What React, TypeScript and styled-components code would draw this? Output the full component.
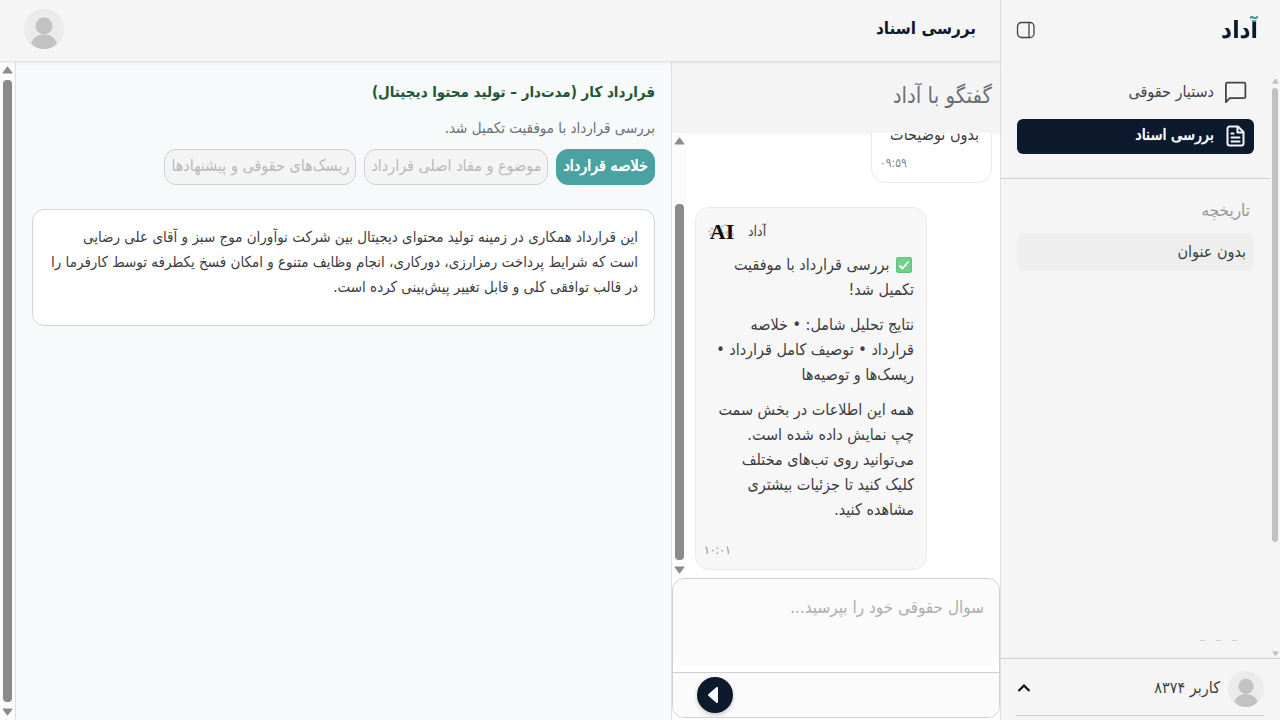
import React from "react";
import styled, { createGlobalStyle, css } from "styled-components";

const GlobalStyle = createGlobalStyle`
  * { box-sizing: border-box; }
  body {
    margin: 0;
    background: #f5f5f5;
    color: #3d3d42;
    font-family: "DejaVu Sans Condensed", "DejaVu Sans", sans-serif;
  }
  button, textarea { font-family: inherit; }
  p, h1, h2 { margin: 0; }
`;

/* Medium weight: the family only has regular and bold. */
const medium = css`
  font-weight: 400;
  text-shadow: 0 0 0 currentColor, 0 0 1px currentColor;
`;

const Shell = styled.div`
  display: flex;
  height: 100vh;
  overflow: hidden;
`;

/* ---------- scroll bars ---------- */

const Track = styled.div<{ $width: number; $bg: string }>`
  flex: none;
  width: ${(p) => p.$width}px;
  display: flex;
  flex-direction: column;
  align-items: center;
  justify-content: space-between;
  gap: 6px;
  padding: 4px 0;
  background: ${(p) => p.$bg};
`;

const NarrowTrack = styled(Track)`
  gap: 4px;
  padding: 2px 0 1px;
`;

const Rail = styled.div<{ $end?: boolean }>`
  flex: 1;
  min-height: 0;
  display: flex;
  flex-direction: column;
  justify-content: ${(p) => (p.$end ? "flex-end" : "flex-start")};
`;

const Thumb = styled.div<{ $width: number; $length: string; $color: string }>`
  width: ${(p) => p.$width}px;
  height: ${(p) => p.$length};
  border-radius: 4px;
  background: ${(p) => p.$color};
`;

type ScrollBarProps = {
  narrow?: boolean;
  length: string;
  end?: boolean;
};

function ScrollBar({ narrow, length, end }: ScrollBarProps) {
  const Bar = narrow ? NarrowTrack : Track;
  const color = narrow ? "#c1c1c1" : "#8b8b8b";
  const thumb = narrow ? 6 : 9;
  const arrow = narrow ? 7 : 11;
  const arrowHeight = narrow ? 6 : 8;
  return (
    <Bar $width={narrow ? 10 : 15} $bg={narrow ? "transparent" : "#fcfcfc"} aria-hidden="true">
      <svg width={arrow} height={arrowHeight} viewBox="0 0 10 8" preserveAspectRatio="none">
        <path d="M5 1 9 7H1Z" fill={color} stroke={color} strokeLinejoin="round" />
      </svg>
      <Rail $end={end}>
        <Thumb $width={thumb} $length={length} $color={color} />
      </Rail>
      <svg width={arrow} height={arrowHeight} viewBox="0 0 10 8" preserveAspectRatio="none">
        <path d="M5 7 9 1H1Z" fill={color} stroke={color} strokeLinejoin="round" />
      </svg>
    </Bar>
  );
}

/* ---------- sidebar ---------- */

const Sidebar = styled.aside`
  flex: none;
  width: 280px;
  display: flex;
  flex-direction: column;
  border-left: 1px solid #e0e1e6;
  background: #f5f5f5;
`;

const SidebarHeader = styled.header`
  height: 76px;
  flex: none;
  display: flex;
  align-items: flex-start;
  justify-content: space-between;
  padding: 16px 22px 0 15px;
`;

const Logo = styled.a`
  font-size: 24px;
  line-height: 28px;
  font-weight: 700;
  text-decoration: none;
  color: transparent;
  background:
    linear-gradient(#4aa3a2, #4aa3a2) right top / 12px 6px no-repeat,
    #0d1a2e;
  background-clip: text;
  -webkit-background-clip: text;
`;

const IconButton = styled.button`
  display: flex;
  align-items: center;
  justify-content: center;
  width: 20px;
  height: 28px;
  padding: 0;
  border: 0;
  background: none;
  color: #444;
  cursor: pointer;
`;

const SidebarBody = styled.div`
  flex: 1;
  min-height: 0;
  display: flex;
`;

const SidebarContent = styled.div`
  flex: 1;
  min-width: 0;
  display: flex;
  flex-direction: column;
`;

const Nav = styled.nav`
  display: flex;
  flex-direction: column;
  gap: 8px;
  padding: 0 16px 24px;
  border-bottom: 1px solid #cfcfd2;
`;

const NavLink = styled.a<{ $active?: boolean }>`
  display: flex;
  align-items: center;
  gap: 9px;
  height: 35px;
  padding: 0 6px 2px;
  border-radius: 6px;
  text-decoration: none;
  font-size: 16px;
  line-height: 24px;
  color: ${(p) => (p.$active ? "#f4f6fa" : "#444448")};
  background: ${(p) => (p.$active ? "#0d1a2e" : "transparent")};
  ${(p) => p.$active && medium}
`;

const NavLabel = styled.span`
  padding-bottom: 2px;
`;

const History = styled.section`
  flex: 1;
  min-height: 0;
  display: flex;
  flex-direction: column;
  padding: 19px 16px 12px;
`;

const HistoryTitle = styled.h2`
  padding: 0 4px;
  margin-bottom: 11px;
  font-size: 17px;
  line-height: 24px;
  font-weight: 400;
  color: #98989b;
`;

const HistoryItem = styled.a`
  display: flex;
  align-items: center;
  height: 38px;
  padding: 0 8px 2px;
  border-radius: 6px;
  background: #eeeeee;
  color: #3d3d42;
  font-size: 16px;
  text-decoration: none;
`;

const CutOffRow = styled.div`
  display: flex;
  gap: 11px;
  margin-top: auto;
  padding: 0 17px 5px;
`;

const CutOffMark = styled.span`
  width: 5px;
  height: 1px;
  background: #cfcfcf;
`;

const UserBar = styled.footer`
  flex: none;
  display: flex;
  flex-direction: column;
  height: 62px;
  padding: 12px 16px 4px 15px;
  border-top: 1px solid #cfcfd2;
`;

const UserRow = styled.div`
  flex: 1;
  display: flex;
  align-items: center;
  gap: 8px;
  padding-bottom: 8px;
  border-bottom: 1px solid #cfcfd2;
`;

const UserName = styled.span`
  flex: 1;
  padding-bottom: 2px;
  font-size: 16px;
  line-height: 24px;
`;

const MenuButton = styled(IconButton)`
  width: 16px;
  padding-bottom: 2px;
`;

function Avatar({ size }: { size: number }) {
  return (
    <svg width={size} height={size} viewBox="0 0 40 40" role="img" aria-label="کاربر">
      <circle cx="20" cy="20" r="20" fill="#ebebeb" />
      <circle cx="20" cy="17" r="8.500" fill="#c2c2c2" />
      <path d="M7 34.500C9 28.500 14 25.500 20 25.500s11 3 13 9C29.500 38.300 25 40 20 40s-9.500-1.700-13-5.500Z" fill="#c2c2c2" />
    </svg>
  );
}

/* ---------- main area ---------- */

const Main = styled.main`
  flex: 1;
  min-width: 0;
  display: flex;
  flex-direction: column;
`;

const TopBar = styled.header`
  flex: none;
  display: flex;
  align-items: center;
  justify-content: space-between;
  height: 62px;
  padding: 0 24px 4px;
  border-bottom: 1px solid #dcdfdf;
  box-shadow: 0 1px 4px rgba(0, 0, 0, 0.06);
  z-index: 1;
`;

const PageTitle = styled.h1`
  padding-bottom: 2px;
  font-size: 17px;
  line-height: 28px;
  font-weight: 700;
  color: #0d1a2e;
`;

const Columns = styled.div`
  flex: 1;
  min-height: 0;
  display: flex;
`;

const Chat = styled.section`
  flex: none;
  width: 328px;
  display: flex;
  flex-direction: column;
  background: #fff;
`;

const ChatTitle = styled.h2`
  flex: none;
  height: 71px;
  padding: 20px 8px;
  font-size: 22px;
  line-height: 28px;
  font-weight: 400;
  color: #6b7078;
  background: #f4f4f4;
  box-shadow: 0 1px 3px rgba(0, 0, 0, 0.05);
`;

const ChatBody = styled.div`
  flex: 1;
  min-height: 0;
  display: flex;
`;

const Messages = styled.div`
  flex: 1;
  min-width: 0;
  display: flex;
  flex-direction: column;
  justify-content: flex-end;
  gap: 24px;
  padding: 0 8px 8px;
  overflow: hidden;
`;

const Bubble = styled.article<{ $own?: boolean }>`
  flex: none;
  align-self: ${(p) => (p.$own ? "flex-start" : "flex-end")};
  width: ${(p) => (p.$own ? "121px" : "232px")};
  padding: ${(p) => (p.$own ? "8px 12px 9px 8px" : "10px 12px 9px 8px")};
  border: 1px solid #e9eaec;
  border-radius: 14px;
  background: ${(p) => (p.$own ? "#fff" : "#f7f7f7")};
`;

const BubbleHead = styled.div`
  display: flex;
  align-items: center;
  justify-content: flex-end;
  gap: 10px;
  height: 26px;
  padding-left: 2px;
  margin-bottom: 8px;
  font-size: 14px;
`;

const BubbleText = styled.p`
  font-size: 16px;
  line-height: 25px;
  white-space: nowrap;
  & + & { margin-top: 10px; }
`;

const CheckMark = styled.svg`
  vertical-align: -3px;
  margin: 0 2px;
`;

const Time = styled.time<{ $gap: number }>`
  display: block;
  margin-top: ${(p) => p.$gap}px;
  text-align: left;
  font-size: 12px;
  line-height: 20px;
  color: #88898d;
`;

const Composer = styled.form`
  flex: none;
  display: flex;
  flex-direction: column;
  margin-bottom: 2px;
  border: 1px solid #cfcfd2;
  border-radius: 12px;
  overflow: hidden;
`;

const Prompt = styled.textarea`
  display: block;
  width: 100%;
  height: 87px;
  margin-bottom: 6px;
  padding: 15px;
  border: 0;
  border-radius: 12px;
  outline: 0;
  resize: none;
  background: #fbfbfb;
  font-size: 17px;
  line-height: 26px;
  &::placeholder { color: #adadb0; opacity: 1; }
`;

const ComposerBar = styled.div`
  display: flex;
  justify-content: flex-end;
  height: 45px;
  padding: 4px 24px;
  border-top: 1px solid #cfcfd2;
  background: #fbfbfb;
`;

const SendButton = styled.button`
  width: 36px;
  height: 36px;
  display: flex;
  align-items: center;
  justify-content: center;
  padding: 0 4px 0 0;
  border: 0;
  border-radius: 50%;
  background: #0d1a2e;
  box-shadow: 0 2px 4px rgba(0, 0, 0, 0.2);
  cursor: pointer;
`;

/* ---------- contract review ---------- */

const Review = styled.section`
  flex: 1;
  min-width: 0;
  padding: 16px;
  border: solid #d5e4e4;
  border-width: 0 1px;
  background: #f6fafb;
`;

const ReviewTitle = styled.h2`
  font-size: 15px;
  line-height: 28px;
  font-weight: 700;
  color: #215732;
`;

const ReviewStatus = styled.p`
  margin-top: 8px;
  font-size: 15px;
  line-height: 28px;
  color: #6b7078;
`;

const Tabs = styled.div`
  display: flex;
  gap: 8px;
  margin-top: 7px;
`;

const Tab = styled.button<{ $active?: boolean }>`
  height: 36px;
  padding: 0 6px 4px;
  border: 1px solid ${(p) => (p.$active ? "#4aa3a2" : "#cfcfd2")};
  border-radius: 12px;
  background: ${(p) => (p.$active ? "#4aa3a2" : "#f4f4f4")};
  color: ${(p) => (p.$active ? "#fff" : "#b9b9bc")};
  font-size: 16px;
  white-space: nowrap;
  ${(p) => p.$active && medium}
`;

const Summary = styled.div`
  margin-top: 24px;
  padding: 15px 16px 25px;
  border: 1px solid #d3d5d6;
  border-radius: 12px;
  background: #fff;
  font-size: 15px;
  line-height: 25px;
`;

export default function App() {
  return (
    <>
      <GlobalStyle />
      <Shell dir="rtl" lang="fa">
        <Sidebar>
          <SidebarHeader>
            <Logo href="#">آداد</Logo>
            <IconButton type="button" aria-label="بستن منو">
              <svg width="20" height="18" viewBox="0 0 20 18" fill="none" stroke="currentColor" strokeWidth="1.300">
                <rect x="1.500" y="1.500" width="16.500" height="15" rx="4" />
                <path d="M13 1.500v15" />
              </svg>
            </IconButton>
          </SidebarHeader>

          <SidebarBody>
            <ScrollBar narrow length="454px" />
            <SidebarContent>
              <Nav>
                <NavLink href="#">
                  <svg width="25" height="25" viewBox="0 0 24 24" fill="none" stroke="currentColor" strokeWidth="1.700" strokeLinejoin="round">
                    <path d="M21.500 16a1.500 1.500 0 0 1-1.500 1.500H6.500L2.800 21.200V4A1.500 1.500 0 0 1 4.300 2.500H20A1.500 1.500 0 0 1 21.500 4Z" />
                  </svg>
                  <NavLabel>دستیار حقوقی</NavLabel>
                </NavLink>
                <NavLink href="#" $active>
                  <svg width="25" height="24" viewBox="0 0 24 24" fill="none" stroke="currentColor" strokeWidth="2" strokeLinecap="round" strokeLinejoin="round">
                    <path d="M14.500 2.500H6a2 2 0 0 0-2 2v15a2 2 0 0 0 2 2h12a2 2 0 0 0 2-2V8Z" />
                    <path d="M14 3v5.500h5.500M8 9.500h2M8 13.500h8M8 17.500h8" />
                  </svg>
                  <NavLabel>بررسی اسناد</NavLabel>
                </NavLink>
              </Nav>
              <History>
                <HistoryTitle>تاریخچه</HistoryTitle>
                <HistoryItem href="#">بدون عنوان</HistoryItem>
                <CutOffRow aria-hidden="true">
                  <CutOffMark />
                  <CutOffMark />
                  <CutOffMark />
                </CutOffRow>
              </History>
            </SidebarContent>
          </SidebarBody>

          <UserBar>
            <UserRow>
              <Avatar size={36} />
              <UserName>کاربر ۸۳۷۴</UserName>
              <MenuButton type="button" aria-label="منوی کاربر">
                <svg width="14" height="10" viewBox="0 0 14 10" fill="none" stroke="#111" strokeWidth="2.200">
                  <path d="M1.500 8 7 2.500 12.500 8" />
                </svg>
              </MenuButton>
            </UserRow>
          </UserBar>
        </Sidebar>

        <Main>
          <TopBar>
            <PageTitle>بررسی اسناد</PageTitle>
            <Avatar size={40} />
          </TopBar>

          <Columns>
            <Chat>
              <ChatTitle>گفتگو با آداد</ChatTitle>
              <ChatBody>
                <Messages>
                  <Bubble $own>
                    <BubbleText>بدون توضیحات</BubbleText>
                    <Time $gap={6}>۰۹:۵۹</Time>
                  </Bubble>
                  <Bubble>
                    <BubbleHead>
                      آداد
                      <svg width="32" height="26" viewBox="0 0 32 26" aria-hidden="true">
                        <g fill="none" stroke="#c4c4c6" strokeDasharray="2 1.500">
                          <circle cx="7" cy="14" r="3.500" strokeWidth="2.500" />
                          <circle cx="19" cy="11" r="4" strokeWidth="2" />
                          <circle cx="24" cy="16" r="3" strokeWidth="2" />
                        </g>
                        <text x="16" y="21" direction="ltr" textAnchor="middle" fontFamily="Liberation Serif, serif" fontWeight="700" fontSize="22" fill="#0b0b0c">AI</text>
                      </svg>
                    </BubbleHead>
                    <BubbleText>
                      <CheckMark width="16" height="16" viewBox="0 0 16 16" role="img" aria-label="✅">
                        <rect x="0.500" y="0.500" width="15" height="15" rx="1.500" fill="#6fcf8b" stroke="#62c480" />
                        <path d="M3.500 8.500 6.500 11.500 12.500 4.500" fill="none" stroke="#fff" strokeWidth="1.800" />
                      </CheckMark>{" "}
                      بررسی قرارداد با موفقیت
                      <br />
                      تکمیل شد!
                    </BubbleText>
                    <BubbleText>
                      نتایج تحلیل شامل: • خلاصه
                      <br />
                      قرارداد • توصیف کامل قرارداد •
                      <br />
                      ریسک‌ها و توصیه‌ها
                    </BubbleText>
                    <BubbleText>
                      همه این اطلاعات در بخش سمت
                      <br />
                      چپ نمایش داده شده است.
                      <br />
                      می‌توانید روی تب‌های مختلف
                      <br />
                      کلیک کنید تا جزئیات بیشتری
                      <br />
                      مشاهده کنید.
                    </BubbleText>
                    <Time $gap={18}>۱۰:۰۱</Time>
                  </Bubble>
                </Messages>
                <ScrollBar length="87%" end />
              </ChatBody>
              <Composer>
                <Prompt aria-label="سوال حقوقی" placeholder="سوال حقوقی خود را بپرسید..." />
                <ComposerBar>
                  <SendButton type="button" aria-label="ارسال">
                    <svg width="12" height="18" viewBox="0 0 12 18">
                      <path d="M10 2v14L2 9Z" fill="#fff" stroke="#fff" strokeWidth="2" strokeLinejoin="round" />
                    </svg>
                  </SendButton>
                </ComposerBar>
              </Composer>
            </Chat>

            <Review>
              <ReviewTitle>قرارداد کار (مدت‌دار – تولید محتوا دیجیتال)</ReviewTitle>
              <ReviewStatus>بررسی قرارداد با موفقیت تکمیل شد.</ReviewStatus>
              <Tabs>
                <Tab type="button" $active>خلاصه قرارداد</Tab>
                <Tab type="button">موضوع و مفاد اصلی قرارداد</Tab>
                <Tab type="button">ریسک‌های حقوقی و پیشنهادها</Tab>
              </Tabs>
              <Summary>
                این قرارداد همکاری در زمینه تولید محتوای دیجیتال بین شرکت نوآوران موج سبز و آقای علی رضایی
                <br />
                است که شرایط پرداخت رمزارزی، دورکاری، انجام وظایف متنوع و امکان فسخ یکطرفه توسط کارفرما را
                <br />
                در قالب توافقی کلی و قابل تغییر پیش‌بینی کرده است.
              </Summary>
            </Review>
            <ScrollBar length="100%" />
          </Columns>
        </Main>
      </Shell>
    </>
  );
}
